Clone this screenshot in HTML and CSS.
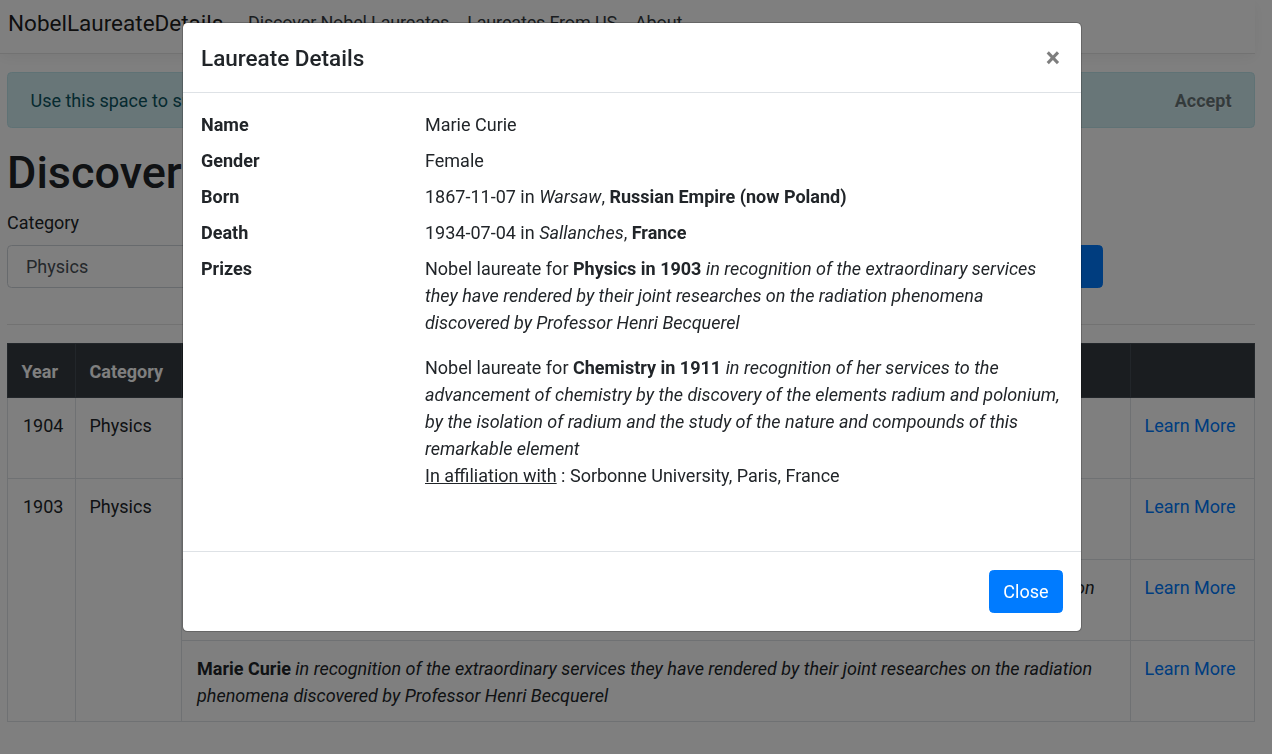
FILE: index.html
```html
<!DOCTYPE html>
<html lang="en">
<head>
<meta charset="utf-8">
<title>Discover Nobel Laureates - NobelLaureateDetails</title>
<link rel="stylesheet" href="styles.css">
</head>
<body>
<header class="navbar">
  <a class="brand" href="#">NobelLaureateDetails</a>
  <nav class="nav">
    <a class="nav-link" href="#">Discover Nobel Laureates</a>
    <a class="nav-link" href="#">Laureates From US</a>
    <a class="nav-link" href="#">About</a>
  </nav>
</header>

<main class="main">
  <div class="alert">
    <span>Use this space to summarize your privacy and cookie use policy. <a href="#">Learn More</a>.</span>
    <button class="accept" type="button">Accept</button>
  </div>

  <h1 class="page-title">Discover Nobel Laureates</h1>

  <div class="filter">
    <div class="field">
      <label class="label">Category</label>
      <div class="select">Physics</div>
    </div>
    <div class="field">
      <label class="label">Year</label>
      <div class="select">All</div>
    </div>
    <button class="btn-search" type="button">Search</button>
  </div>

  <hr class="divider">

  <table class="results">
    <thead>
      <tr>
        <th class="c-year">Year</th>
        <th class="c-cat">Category</th>
        <th>Laureates</th>
        <th class="c-link"></th>
      </tr>
    </thead>
    <tbody>
      <tr>
        <td>1904</td>
        <td>Physics</td>
        <td><b>Lord Rayleigh</b> <i>for his investigations of the densities of the most important gases and</i><br><i>for his discovery of argon in connection with these studies</i></td>
        <td><a href="#">Learn More</a></td>
      </tr>
      <tr>
        <td rowspan="3">1903</td>
        <td rowspan="3">Physics</td>
        <td><b>Henri Becquerel</b> <i>in recognition of the extraordinary services he has rendered by his</i><br><i>discovery of spontaneous radioactivity</i></td>
        <td><a href="#">Learn More</a></td>
      </tr>
      <tr>
        <td><b>Pierre Curie</b> <i>in recognition of the extraordinary services they have rendered by their joint researches on the radiation phenomena discovered by Professor Henri Becquerel</i></td>
        <td><a href="#">Learn More</a></td>
      </tr>
      <tr>
        <td><b>Marie Curie</b> <i>in recognition of the extraordinary services they have rendered by their joint researches on the radiation phenomena discovered by Professor Henri Becquerel</i></td>
        <td><a href="#">Learn More</a></td>
      </tr>
    </tbody>
  </table>
</main>

<div class="backdrop"></div>

<div class="modal">
  <div class="modal-content">
    <div class="modal-header">
      <h5 class="modal-title">Laureate Details</h5>
      <button class="close" type="button" aria-label="Close">&times;</button>
    </div>
    <div class="modal-body">
      <dl class="details">
        <dt>Name</dt>
        <dd>Marie Curie</dd>
        <dt>Gender</dt>
        <dd>Female</dd>
        <dt>Born</dt>
        <dd>1867-11-07 in <i>Warsaw</i>, <b>Russian Empire (now Poland)</b></dd>
        <dt>Death</dt>
        <dd>1934-07-04 in <i>Sallanches</i>, <b>France</b></dd>
        <dt>Prizes</dt>
        <dd>
          <p class="prize">Nobel laureate for <b>Physics in 1903</b> <i>in recognition of the extraordinary services they have rendered by their joint researches on the radiation phenomena discovered by Professor Henri Becquerel</i></p>
          <p class="prize">Nobel laureate for <b>Chemistry in 1911</b> <i>in recognition of her services to the advancement of chemistry by the discovery of the elements radium and polonium, by the isolation of radium and the study of the nature and compounds of this remarkable element</i><br><u>In affiliation with</u> : Sorbonne University, Paris, France</p>
        </dd>
      </dl>
    </div>
    <div class="modal-footer">
      <button class="btn-close" type="button">Close</button>
    </div>
  </div>
</div>
</body>
</html>
```

FILE: styles.css
```css
* {
  box-sizing: border-box;
}

html {
  font-size: 18px;
}

body {
  margin: 0;
  padding-right: 17px;
  overflow: hidden;
  font-family: Roboto, "Liberation Sans", sans-serif;
  font-size: 18px;
  line-height: 1.5;
  color: #212529;
  background: #fff;
}

a {
  color: #007bff;
  text-decoration: none;
}

/* navbar */
.navbar {
  display: flex;
  align-items: flex-start;
  height: 54px;
  padding: 6px 0 0 8px;
  border-bottom: 1px solid #e5e5e5;
  box-shadow: 0 4px 13px rgba(0, 0, 0, .05);
}

.brand {
  min-width: 231px;
  font-size: 22.5px;
  line-height: 34px;
  color: rgba(0, 0, 0, .9);
}

.nav {
  display: flex;
  padding-top: 3px;
}

.nav-link {
  padding: 0 9px;
  color: #343a40;
  letter-spacing: -0.15px;
}

/* main */
.main {
  padding: 18px 0 0 7px;
}

.alert {
  position: relative;
  padding: 13.5px 100px 13.5px 22.5px;
  margin-bottom: 18px;
  color: #0c5460;
  background: #d1ecf1;
  border: 1px solid #bee5eb;
  border-radius: 4.5px;
}

.alert a {
  color: #062c33;
  font-weight: 700;
}

.accept {
  position: absolute;
  top: 0;
  right: 0;
  padding: 13.5px 22.5px;
  border: 0;
  background: transparent;
  font-family: inherit;
  font-size: 18px;
  line-height: 27px;
  font-weight: 700;
  color: #000;
  opacity: .5;
  text-shadow: 0 1px 0 #fff;
}

.page-title {
  margin: 0 0 9px;
  font-size: 45px;
  font-weight: 500;
  line-height: 1.2;
}

.filter {
  display: flex;
  align-items: flex-end;
  gap: 18px;
  padding-right: 152px;
  margin-bottom: 18px;
}

.field {
  flex: 1;
}

.label {
  display: block;
  margin-bottom: 9px;
}

.select {
  height: 42.5px;
  padding: 6.75px 18px;
  border: 1px solid #ced4da;
  border-radius: 4.5px;
  color: #495057;
}

.btn-search {
  width: 110px;
  height: 42.5px;
  border: 1px solid #007bff;
  border-radius: 4.5px;
  background: #007bff;
  color: #fff;
  font-family: inherit;
  font-size: 18px;
}

.divider {
  margin: 36px 0 18px;
  border: 0;
  border-top: 1px solid rgba(0, 0, 0, .1);
}

.results {
  width: 100%;
  table-layout: fixed;
  border-collapse: collapse;
  border: 1px solid #dee2e6;
}

.results th,
.results td {
  padding: 13px 13.5px;
  border: 1px solid #dee2e6;
  vertical-align: top;
  text-align: left;
}

.results td {
  padding-top: 14.5px;
  padding-bottom: 11.5px;
}

.results thead th {
  padding-top: 14px;
  padding-bottom: 12px;
  background: #343a40;
  color: #fff;
  border-color: #454d55;
  font-weight: 700;
  vertical-align: bottom;
}

.c-year {
  width: 68px;
}

.c-cat {
  width: 106px;
}

.c-link {
  width: 124px;
}

.results tbody td:first-child {
  padding-left: 15px;
}

/* modal */
.backdrop {
  position: fixed;
  inset: 0;
  background: rgba(0, 0, 0, .5);
}

.modal {
  position: fixed;
  inset: 0;
  display: flex;
  justify-content: center;
  align-items: flex-start;
  padding: 22px 8px 0 0;
}

.modal-content {
  width: 900px;
  background: #fff;
  background-clip: padding-box;
  border: 1px solid rgba(0, 0, 0, .2);
  border-radius: 5.4px;
}

.modal-header {
  display: flex;
  align-items: flex-start;
  padding: 18.5px 18px 17px;
  border-bottom: 1px solid #dee2e6;
}

.modal-title {
  margin: 0;
  font-size: 22.5px;
  font-weight: 500;
  line-height: 1.5;
}

.close {
  margin: -18px -15px -18px auto;
  padding: 21px 18px 15px;
  border: 0;
  background: transparent;
  font-family: inherit;
  font-size: 27px;
  font-weight: 700;
  line-height: 1;
  color: #000;
  opacity: .5;
  text-shadow: 0 1px 0 #fff;
}

.modal-body {
  padding: 18px 18px 35px;
}

.details {
  display: grid;
  grid-template-columns: 224px 1fr;
  margin: 0;
}

.details dt {
  font-weight: 700;
}

.details dd {
  margin: 0 0 9px;
}

.prize {
  margin: 0 0 18px;
}

.modal-footer {
  display: flex;
  justify-content: flex-end;
  padding: 13.5px;
  border-top: 1px solid #dee2e6;
}

.btn-close {
  margin: 4.5px;
  padding: 6.75px 13.5px;
  border: 1px solid #007bff;
  border-radius: 4.5px;
  background: #007bff;
  color: #fff;
  font-family: inherit;
  font-size: 18px;
  line-height: 1.5;
}
```
